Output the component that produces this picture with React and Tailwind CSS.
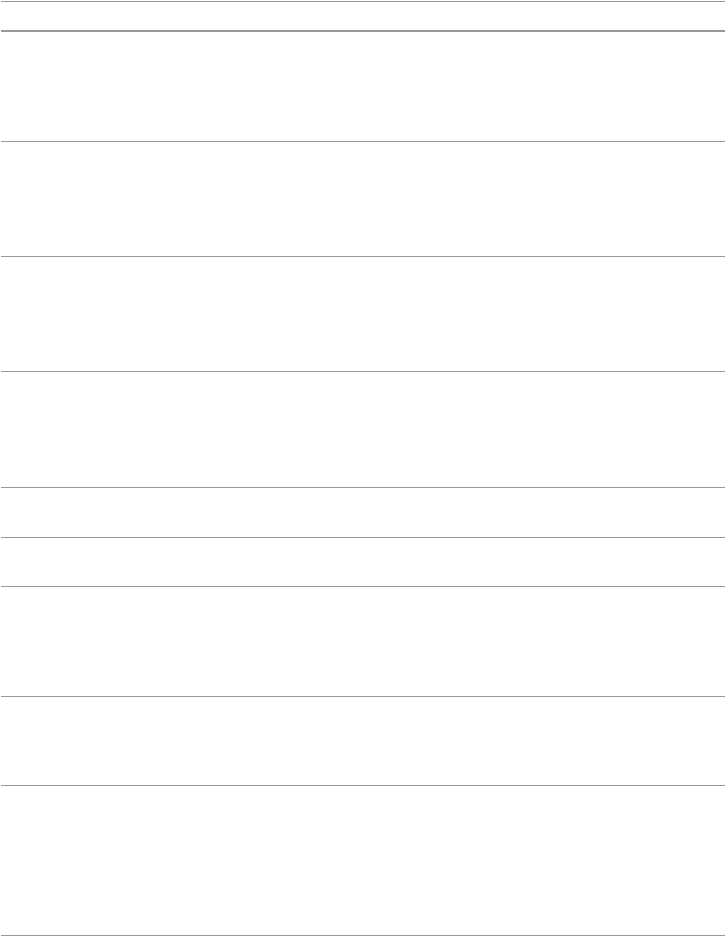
export default function App() {
  const rows = [109, 114, 114, 115, 49, 48, 109, 88, 149];
  return (
    <div className="w-[726px] bg-white pt-[1px] pl-[1px] pr-[1px]">
      <div className="border-t border-[#999999]">
        <div className="h-[30px] border-b-2 border-[#999999]"></div>
        {rows.map((h, i) => (
          <div key={i} className="border-b border-[#999999]" style={{ height: h + 1 }}></div>
        ))}
      </div>
    </div>
  );
}
